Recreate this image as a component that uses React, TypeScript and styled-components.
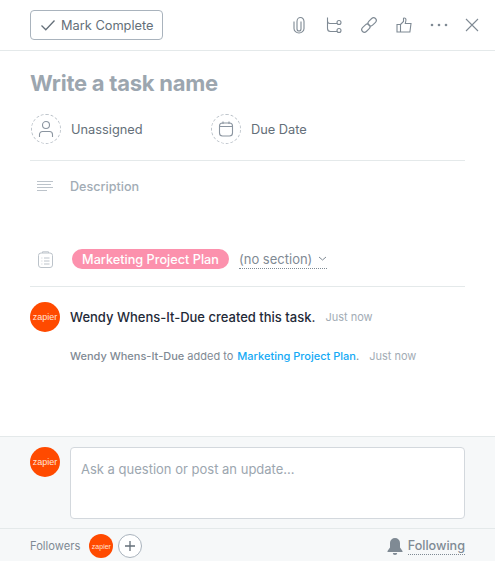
import React from "react";
import styled, { createGlobalStyle } from "styled-components";

const Global = createGlobalStyle`
  html, body { margin: 0; padding: 0; background: #fff; }
  body { font-family: Inter, "Liberation Sans", sans-serif; -webkit-font-smoothing: antialiased; }
  * { box-sizing: border-box; }
`;

const Page = styled.div`
  width: 495px;
  height: 561px;
  display: flex;
  flex-direction: column;
  background: #fff;
  overflow: hidden;
`;

const Toolbar = styled.header`
  height: 51px;
  flex: none;
  display: flex;
  align-items: flex-start;
  justify-content: space-between;
  padding: 10px 13px 0 30px;
  border-bottom: 1px solid #e4e9ea;
`;

const CompleteButton = styled.button`
  width: 133px;
  height: 30px;
  display: flex;
  align-items: center;
  gap: 5px;
  padding: 0 0 0 9px;
  background: #fff;
  border: 1px solid #a9b3bd;
  border-radius: 4px;
  color: #646f79;
  font: 400 12.8px Inter, sans-serif;
`;

const ToolIcons = styled.div`
  display: flex;
  align-items: center;
  gap: 15px;
  height: 30px;
  color: #7f8a94;
`;

const ToolIcon = styled.svg`
  width: 20px;
  height: 20px;
  fill: none;
  stroke: currentColor;
  stroke-width: 1.1;
  display: block;
`;

const DotsIcon = styled(ToolIcon)`
  fill: currentColor;
  stroke: none;
`;

const CloseIcon = styled(ToolIcon)`
  margin-left: -2px;
`;

const Body = styled.main`
  flex: 1;
  min-height: 0;
  display: flex;
  flex-direction: column;
  padding: 0 30px;
`;

const Title = styled.h1`
  margin: 17px 0 0;
  height: 30px;
  font: 700 22px/30px Inter, sans-serif;
  color: #9ca6af;
  letter-spacing: -0.25px;
`;

const MetaRow = styled.div`
  display: flex;
  align-items: center;
  height: 30px;
  margin-top: 16px;
  padding-left: 1px;
`;

const MetaItem = styled.div`
  display: flex;
  align-items: center;
  gap: 10px;
  width: 180px;
  font: 400 12.8px Inter, sans-serif;
  color: #646f79;
`;

const DashedCircle = styled.span`
  width: 30px;
  height: 30px;
  flex: none;
  border: 1px dashed #bcc3ca;
  border-radius: 50%;
  display: flex;
  align-items: center;
  justify-content: center;
  color: #8b95a0;
`;

const Divider = styled.div<{ $top: number }>`
  height: 1px;
  flex: none;
  background: #e4e9ea;
  margin-top: ${(p) => p.$top}px;
`;

const DescriptionRow = styled.div`
  display: flex;
  align-items: center;
  height: 20px;
  margin-top: 15px;
  padding-left: 7px;
  gap: 17px;
  font: 500 12.6px Inter, sans-serif;
  color: #a2acb5;
`;

const ProjectRow = styled.div`
  display: flex;
  align-items: center;
  height: 20px;
  margin-top: 53px;
  padding-left: 8px;
`;

const Pill = styled.span`
  margin-left: 19px;
  height: 20px;
  width: 157px;
  display: flex;
  align-items: center;
  justify-content: center;
  border-radius: 10px;
  background: #fc91ad;
  color: #fff;
  font: 500 12.7px Inter, sans-serif;
  white-space: nowrap;
`;

const SectionPicker = styled.span`
  margin-left: 10px;
  display: flex;
  align-items: center;
  gap: 6px;
  height: 19px;
  font: 400 13px/18px Inter, sans-serif;
  color: #7f8a94;
  border-bottom: 1px dotted #7f8a94;
  white-space: nowrap;
`;

const Story = styled.div`
  display: flex;
  align-items: center;
  margin-top: 15px;
  height: 30px;
`;

const AvatarCircle = styled.span<{ $size: number }>`
  width: ${(p) => p.$size}px;
  height: ${(p) => p.$size}px;
  flex: none;
  border-radius: 50%;
  background: #ff4a00;
  color: #ffe4d6;
  display: flex;
  align-items: center;
  justify-content: center;
  font: 400 ${(p) => (p.$size > 26 ? 9 : 7)}px "Liberation Sans", sans-serif;
`;

const StoryAvatar = styled(AvatarCircle)`
  margin-right: 10px;
`;

const StoryText = styled.span`
  font: 500 13px Inter, sans-serif;
  color: #1f2a38;
  white-space: nowrap;
`;

const Stamp = styled.span`
  margin-left: 10px;
  font: 400 11px Inter, sans-serif;
  color: #a2acb5;
  white-space: nowrap;
`;

const SubStory = styled.div`
  margin: 16px 0 0 40px;
  height: 16px;
  display: flex;
  align-items: center;
  font: 500 11px Inter, sans-serif;
  color: #7f8a94;
  white-space: nowrap;
`;

const Faint = styled.span`
  font-weight: 400;
  white-space: pre;
`;

const ProjectLink = styled.span`
  color: #14aaf5;
  margin-left: 4px;
`;

const Composer = styled.section`
  flex: none;
  height: 92px;
  display: flex;
  gap: 10px;
  padding: 10px 30px 0;
  background: #f6f8f9;
  border-top: 1px solid #e4e9ea;
`;

const InputBox = styled.div`
  flex: 1;
  height: 72px;
  padding: 13px 10px;
  background: #fff;
  border: 1px solid #d3d8dd;
  border-radius: 4px;
  font: 400 13px/16px Inter, sans-serif;
  color: #9ca6af;
`;

const Footer = styled.footer`
  flex: none;
  height: 33px;
  display: flex;
  align-items: center;
  padding: 2px 30px 0;
  background: #f6f8f9;
  border-top: 1px solid #e4e9ea;
`;

const FollowersLabel = styled.span`
  font: 400 11.2px Inter, sans-serif;
  color: #7f8a94;
  margin-right: 9px;
`;

const AddButton = styled.span`
  width: 24px;
  height: 24px;
  margin-left: 5px;
  border: 1px solid #a9b3bd;
  border-radius: 50%;
  background: #fff;
  display: flex;
  align-items: center;
  justify-content: center;
  color: #646f79;
`;

const Following = styled.span`
  margin-left: auto;
  display: flex;
  align-items: center;
  gap: 5px;
  color: #7f8a94;
`;

const FollowingText = styled.span`
  font: 500 12.6px/17px Inter, sans-serif;
  border-bottom: 1px dotted #7f8a94;
`;

const Line = styled.svg`
  display: block;
  fill: none;
  stroke: currentColor;
  flex: none;
`;

const MutedLine = styled(Line)`
  color: #bcc3ca;
`;

export default function App() {
  return (
    <Page>
      <Global />
      <Toolbar>
        <CompleteButton>
          <Line width="16" height="16" viewBox="0 0 16 16" strokeWidth="1.3">
            <path d="M1.5 8.5 L5.8 12.8 L14.5 3.5" />
          </Line>
          Mark Complete
        </CompleteButton>
        <ToolIcons>
          <ToolIcon viewBox="0 0 20 20">
            <path d="M5 6.500v7a5 4.500 0 0 0 10 0V6.500a3.500 4 0 0 0-7 0v7.500a2 2 0 0 0 4 0V6.500" />
          </ToolIcon>
          <ToolIcon viewBox="0 0 20 20">
            <path d="M3.500 3v11a3 3 0 0 0 3 3h6.500M3.500 6.500a2.500 2.500 0 0 0 2.500 2.500h7" transform="translate(0 -.5)" />
            <circle cx="15" cy="7.500" r="2" />
            <circle cx="15" cy="15.500" r="2" />
          </ToolIcon>
          <ToolIcon viewBox="0 0 20 20">
            <rect x="-5.500" y="-2.700" width="9.500" height="5.400" rx="2.700" transform="translate(7.400 12.600) rotate(-45)" />
            <rect x="-4" y="-2.700" width="9.500" height="5.400" rx="2.700" transform="translate(12.600 7.400) rotate(-45)" />
          </ToolIcon>
          <ToolIcon viewBox="0 0 20 20">
            <path d="M3 9.500h3.500v7.500H3zM6.500 9.500L9.500 6.500V3.200c1.500-.6 2.800.5 2.400 2.300L11.300 8.500H17l-1.100 8.500H6.500" />
          </ToolIcon>
          <DotsIcon viewBox="0 0 20 20">
            <circle cx="3" cy="10" r="1.300" />
            <circle cx="10" cy="10" r="1.300" />
            <circle cx="17" cy="10" r="1.300" />
          </DotsIcon>
          <CloseIcon viewBox="0 0 20 20">
            <path d="M4 4l12 12M16 4L4 16" />
          </CloseIcon>
        </ToolIcons>
      </Toolbar>
      <Body>
        <Title>Write a task name</Title>
        <MetaRow>
          <MetaItem>
            <DashedCircle>
              <Line width="16" height="18" viewBox="0 0 16 18" strokeWidth="1.1">
                <circle cx="8" cy="5" r="3.500" />
                <path d="M1.500 17v-2.500a3 3 0 0 1 3-3h7a3 3 0 0 1 3 3V17" />
              </Line>
            </DashedCircle>
            Unassigned
          </MetaItem>
          <MetaItem>
            <DashedCircle>
              <Line width="16" height="16" viewBox="0 0 16 16" strokeWidth="1.1">
                <rect x="1.500" y="2" width="13" height="13" rx="3" />
                <path d="M1.500 5.500h13M5 .5v2.500M11 .5v2.500" />
              </Line>
            </DashedCircle>
            Due Date
          </MetaItem>
        </MetaRow>
        <Divider $top={16} />
        <DescriptionRow>
          <MutedLine width="16" height="11" viewBox="0 0 16 11" strokeWidth="1">
            <path d="M0 .5h16M0 3.500h14M0 6.500h16M0 9.500h10" />
          </MutedLine>
          Description
        </DescriptionRow>
        <ProjectRow>
          <MutedLine width="15" height="17" viewBox="0 0 15 17" strokeWidth="1">
            <rect x=".5" y="2" width="14" height="14.500" rx="2.500" />
            <path d="M4.500 2V.8h6V2M3.500 7h.8M6 7h5.500M3.500 10h.8M6 10h5.500M3.500 13h.8M6 13h5.500" />
          </MutedLine>
          <Pill>Marketing Project Plan</Pill>
          <SectionPicker>
            (no section)
            <Line width="9" height="5" viewBox="0 0 9 5" strokeWidth="1">
              <path d="M1 1l3.500 3L8 1" />
            </Line>
          </SectionPicker>
        </ProjectRow>
        <Divider $top={17} />
        <Story>
          <StoryAvatar $size={30}>zapier</StoryAvatar>
          <StoryText>Wendy Whens-It-Due created this task.</StoryText>
          <Stamp>Just now</Stamp>
        </Story>
        <SubStory>
          Wendy Whens-It-Due<Faint> added to</Faint>
          <ProjectLink>Marketing Project Plan</ProjectLink>
          <Faint>.</Faint>
          <Stamp>Just now</Stamp>
        </SubStory>
      </Body>
      <Composer>
        <AvatarCircle $size={30}>zapier</AvatarCircle>
        <InputBox>Ask a question or post an update...</InputBox>
      </Composer>
      <Footer>
        <FollowersLabel>Followers</FollowersLabel>
        <AvatarCircle $size={24}>zapier</AvatarCircle>
        <AddButton>
          <Line width="12" height="12" viewBox="0 0 12 12" strokeWidth="1.3">
            <path d="M6 1v10M1 6h10" />
          </Line>
        </AddButton>
        <Following>
          <svg width="16" height="17" viewBox="0 0 16 17" fill="currentColor">
            <path d="M8 0a5 5 0 0 0-5 5v4.500L.5 13v1h15v-1L13 9.500V5a5 5 0 0 0-5-5zM5.800 15a2.200 2 0 0 0 4.400 0z" />
          </svg>
          <FollowingText>Following</FollowingText>
        </Following>
      </Footer>
    </Page>
  );
}
